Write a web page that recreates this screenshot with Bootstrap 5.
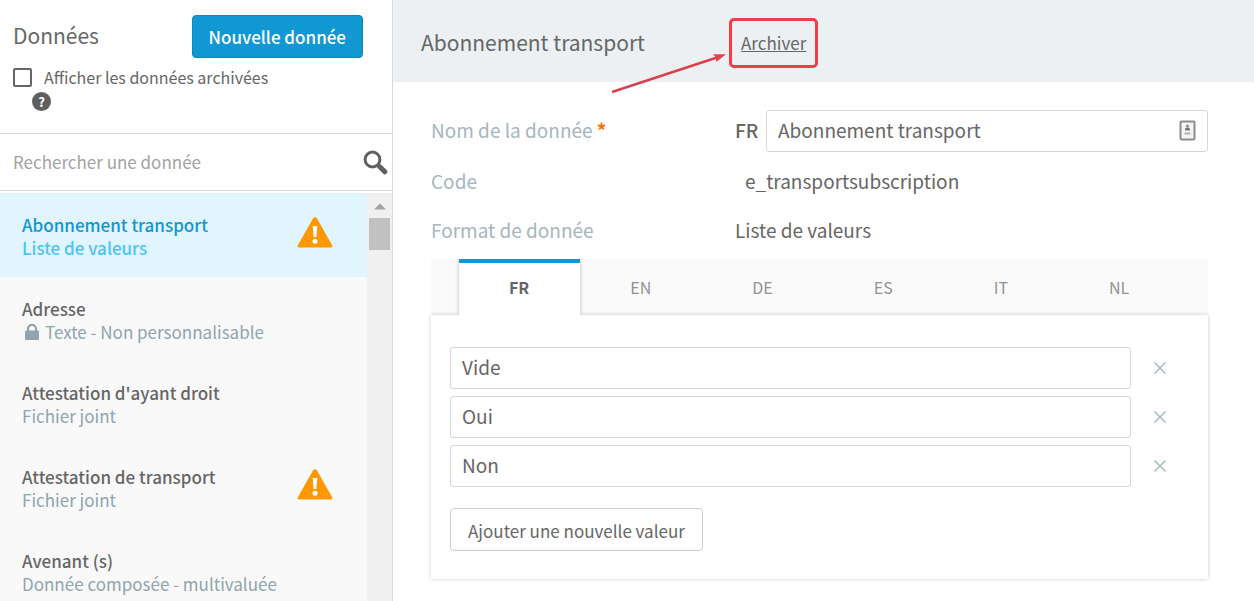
<!DOCTYPE html>
<html lang="fr">
<head>
<meta charset="utf-8">
<meta name="viewport" content="width=device-width, initial-scale=1">
<title>Données</title>
<link rel="stylesheet" href="https://cdn.jsdelivr.net/npm/bootstrap@5.3.0/dist/css/bootstrap.min.css">
<style>
  :root { --ink: #666; --accent: #1197d1; --slate: #90a4ae; --line: #cfd8dc; }
  body { font-family: "Noto Sans CJK SC", "Source Sans Pro", sans-serif; font-size: 16px; line-height: 22px; color: var(--ink); background: #fff; }
  svg { display: block; }

  /* Sidebar */
  .side { flex: 0 0 393px; border-right: 1px solid #d3dae2; }
  .side-head { height: 134px; padding: 15px 29px 0 13px; border-bottom: 1px solid #d6dadd; }
  .heading { font-size: 21px; line-height: 28px; font-weight: 400; margin: 0; padding-bottom: 3px; }
  .btn-new { --bs-btn-color: #fff; --bs-btn-bg: var(--accent); --bs-btn-border-color: #0f87bc; --bs-btn-hover-color: #fff; --bs-btn-hover-bg: #0f87bc; height: 43px; padding: 0 16px; border-radius: 4px; font-size: 17px; line-height: 24px; font-weight: 500; }
  .check-row { gap: 12px; margin-top: 8px; }
  .form-check-input.archived { width: 19px; height: 19px; margin: 0; border: 2px solid var(--ink); border-radius: 2px; }
  .help { width: 19px; height: 19px; margin: 4px 0 0 19px; border-radius: 50%; background: #5f5f5f; color: #fff; font-size: 13px; line-height: 19px; font-weight: 700; }
  .search { height: 57px; padding: 0 4px 0 13px; border-bottom: 1px solid var(--line); }
  .search input { font-size: 17px; line-height: 24px; color: var(--ink); }
  .search input::placeholder { color: #a3a3a3; opacity: 1; }
  .list-area { margin-top: 2px; background: #f9f9f9; }
  .entry { height: 84px; padding: 20px 34px 0 22px; color: var(--ink); text-decoration: none; }
  .entry.active { background: #e0f5fd; color: var(--accent); }
  .entry-name, .entry-kind { font-size: 17px; line-height: 23px; }
  .entry-name { font-weight: 500; }
  .entry-kind { color: var(--slate); }
  .entry.active .entry-kind { color: #4fc3f7; font-weight: 500; }
  .lock { margin: 0 6px 0 3px; }
  .scroll { flex: 0 0 25px; padding: 10px 2px 0; background: #f0f0f0; }
  .thumb { height: 32px; margin-top: 8px; background: #c1c1c1; }

  /* Record */
  .record-head { min-height: 82px; padding: 4px 28px 0; background: #ecf0f3; }
  .archive { margin-left: 84px; padding: 11px 9px; border: 3px solid #ee3e4c; border-radius: 5px; font-size: 17px; line-height: 22px; color: var(--ink); }
  .arrow { position: absolute; left: -34px; top: 32px; pointer-events: none; }
  .record-body { padding: 28px 46px 22px 38px; }
  .field-label { flex: 0 0 304px; color: #a6b6be; }
  .field-label, .field-value { font-size: 19px; line-height: 28px; }
  .field-row { min-height: 49px; }
  .name-row > .field-label, .name-row > .lang { padding-bottom: 2px; }
  .required { color: #ff6d00; font-weight: 700; }
  .code-value { margin-left: 10px; }
  .lang { width: 31px; font-size: 19px; line-height: 28px; font-weight: 500; }
  .text-field { height: 42px; padding: 0 11px 3px; border: 1px solid var(--line); border-radius: 3px; font-size: 19px; line-height: 28px; color: var(--ink); }
  .contact { position: absolute; right: 12px; top: 10px; }
  .lang-tabs { margin-top: 5px; background: #fafafa; padding-left: 28px; }
  .lang-tabs .nav-link { height: 56px; padding: 0 51px 4px 50px; border: 0; border-top: 4px solid transparent; border-radius: 0; background: none; font-size: 16px; line-height: 22px; color: #929292; }
  .lang-tabs .nav-link.active { position: relative; z-index: 1; background: #fff; color: var(--ink); border-top-color: var(--accent); font-weight: 700; box-shadow: 0 0 4px rgba(0,0,0,.25); clip-path: inset(0 -4px 0 -4px); }
  .values { padding: 32px 19px 28px; background: #fff; box-shadow: 0 0 4px rgba(0,0,0,.22); }
  .value-row { margin-bottom: 7px; }
  .remove { width: 58px; height: 42px; padding: 0; border: 0; background: none; }
  .btn-add { --bs-btn-color: var(--ink); --bs-btn-border-color: #cfcfcf; --bs-btn-bg: #fff; height: 43px; margin-top: 14px; padding: 2px 17px 0; border-radius: 4px; font-size: 17px; line-height: 24px; }
</style>
</head>
<body>
<svg class="d-none" aria-hidden="true">
  <symbol id="warn" viewBox="0 0 36 31"><path d="M16 1.500Q18-.8 20 1.500L35 28Q36 30.500 33.500 30.500H2.500Q0 30.500 1 28Z" fill="#ff9800"/><path d="M15.700 9h4.600l-.9 11h-2.800z" fill="#fff"/><circle cx="18" cy="24.300" r="2.500" fill="#fff"/></symbol>
  <symbol id="cross" viewBox="0 0 14 14"><path d="M1.500 1.500l11 11M12.500 1.500l-11 11" stroke="#a9bac2" stroke-width="1.500" fill="none"/></symbol>
</svg>
<div class="d-flex vh-100 overflow-hidden">
  <aside class="side d-flex flex-column">
    <div class="side-head flex-shrink-0">
      <div class="d-flex align-items-center justify-content-between">
        <h1 class="heading">Données</h1>
        <button type="button" class="btn btn-new">Nouvelle donnée</button>
      </div>
      <div class="check-row d-flex align-items-center">
        <input class="form-check-input archived" type="checkbox" id="archived">
        <label for="archived">Afficher les données archivées</label>
      </div>
      <div class="help text-center" title="Aide">?</div>
    </div>
    <form class="search d-flex align-items-center flex-shrink-0" role="search">
      <input type="search" class="form-control border-0 p-0 bg-transparent shadow-none" placeholder="Rechercher une donnée" aria-label="Rechercher une donnée">
      <button type="button" class="btn border-0 p-0" aria-label="Rechercher">
        <svg width="25" height="25" viewBox="0 0 25 25" fill="none" stroke="#606060"><circle cx="9.500" cy="9.500" r="7.400" stroke-width="3"/><path d="M14.500 14.500l2 2" stroke-width="3"/><path d="M16.800 16.800l5 5" stroke-width="5" stroke-linecap="round"/></svg>
      </button>
    </form>
    <div class="list-area d-flex flex-grow-1 overflow-hidden">
      <nav class="flex-grow-1 overflow-hidden" aria-label="Liste des données">
        <a href="#" class="entry active d-flex justify-content-between align-items-start" aria-current="true">
          <span><span class="entry-name d-block">Abonnement transport</span><span class="entry-kind d-block">Liste de valeurs</span></span>
          <svg class="mt-1" width="36" height="31" role="img" aria-label="Attention"><use href="#warn"/></svg>
        </a>
        <a href="#" class="entry d-block">
          <span class="entry-name d-block">Adresse</span>
          <span class="entry-kind d-flex align-items-center"><svg class="lock" width="14" height="16" viewBox="0 0 14 16" aria-hidden="true"><path d="M3 7V4.800a4 4 0 0 1 8 0V7" fill="none" stroke="#90a4ae" stroke-width="2.200"/><rect y="6.500" width="14" height="9.500" rx="1" fill="#90a4ae"/></svg>Texte - Non personnalisable</span>
        </a>
        <a href="#" class="entry d-block">
          <span class="entry-name d-block">Attestation d'ayant droit</span>
          <span class="entry-kind d-block">Fichier joint</span>
        </a>
        <a href="#" class="entry d-flex justify-content-between align-items-start">
          <span><span class="entry-name d-block">Attestation de transport</span><span class="entry-kind d-block">Fichier joint</span></span>
          <svg class="mt-1" width="36" height="31" role="img" aria-label="Attention"><use href="#warn"/></svg>
        </a>
        <a href="#" class="entry d-block">
          <span class="entry-name d-block">Avenant (s)</span>
          <span class="entry-kind d-block">Donnée composée - multivaluée</span>
        </a>
      </nav>
      <div class="scroll" aria-hidden="true">
        <svg class="mx-auto" width="12" height="7" viewBox="0 0 12 7"><path d="M0 6.500L6 .5l6 6z" fill="#a3a3a3"/></svg>
        <div class="thumb"></div>
      </div>
    </div>
  </aside>

  <main class="flex-grow-1 overflow-auto">
    <header class="record-head d-flex align-items-center">
      <h2 class="heading">Abonnement transport</h2>
      <div class="position-relative">
        <a href="#" class="archive d-block">Archiver</a>
        <svg class="arrow" width="116" height="44" viewBox="0 0 116 44" aria-hidden="true"><path d="M1 42L106 7.500" stroke="#d9404d" stroke-width="2.400"/><path d="M115 4.200L102 4.200l3 3.300.2 4.500z" fill="#ee3e4c"/></svg>
      </div>
    </header>
    <div class="record-body">
      <div class="name-row d-flex align-items-center">
        <label class="field-label" for="name">Nom de la donnée <span class="required">*</span></label>
        <span class="lang">FR</span>
        <div class="position-relative flex-grow-1">
          <input type="text" class="form-control text-field shadow-none" id="name" value="Abonnement transport">
          <svg class="contact" width="17" height="21" viewBox="0 0 17 21" aria-hidden="true"><rect x="1.500" y="1.500" width="14" height="18" rx="1" fill="#f4f4f4" stroke="#8c8c8c" stroke-width="2"/><circle cx="8.500" cy="6" r="1.500" fill="#888"/><path d="M6 10.500V9q0-1.500 2.500-1.500T11 9v1.500z" fill="#777"/><path d="M5.500 13.500h6" stroke="#b0b0b0" stroke-width="2"/></svg>
        </div>
      </div>
      <div class="field-row d-flex align-items-center mt-1">
        <span class="field-label">Code</span><span class="field-value code-value">e_transportsubscription</span>
      </div>
      <div class="field-row d-flex align-items-center">
        <span class="field-label">Format de donnée</span><span class="field-value">Liste de valeurs</span>
      </div>
      <div class="lang-tabs nav" role="tablist">
        <button type="button" class="nav-link active" role="tab" aria-selected="true">FR</button>
        <button type="button" class="nav-link" role="tab">EN</button>
        <button type="button" class="nav-link" role="tab">DE</button>
        <button type="button" class="nav-link" role="tab">ES</button>
        <button type="button" class="nav-link" role="tab">IT</button>
        <button type="button" class="nav-link" role="tab">NL</button>
      </div>
      <div class="values" role="tabpanel">
        <div class="value-row d-flex">
          <input type="text" class="form-control text-field shadow-none" value="Vide" aria-label="Valeur 1">
          <button type="button" class="remove flex-shrink-0" aria-label="Supprimer Vide"><svg class="mx-auto" width="14" height="14"><use href="#cross"/></svg></button>
        </div>
        <div class="value-row d-flex">
          <input type="text" class="form-control text-field shadow-none" value="Oui" aria-label="Valeur 2">
          <button type="button" class="remove flex-shrink-0" aria-label="Supprimer Oui"><svg class="mx-auto" width="14" height="14"><use href="#cross"/></svg></button>
        </div>
        <div class="value-row d-flex">
          <input type="text" class="form-control text-field shadow-none" value="Non" aria-label="Valeur 3">
          <button type="button" class="remove flex-shrink-0" aria-label="Supprimer Non"><svg class="mx-auto" width="14" height="14"><use href="#cross"/></svg></button>
        </div>
        <button type="button" class="btn btn-add">Ajouter une nouvelle valeur</button>
      </div>
    </div>
  </main>
</div>
<script src="https://cdn.jsdelivr.net/npm/bootstrap@5.3.0/dist/js/bootstrap.bundle.min.js"></script>
</body>
</html>
